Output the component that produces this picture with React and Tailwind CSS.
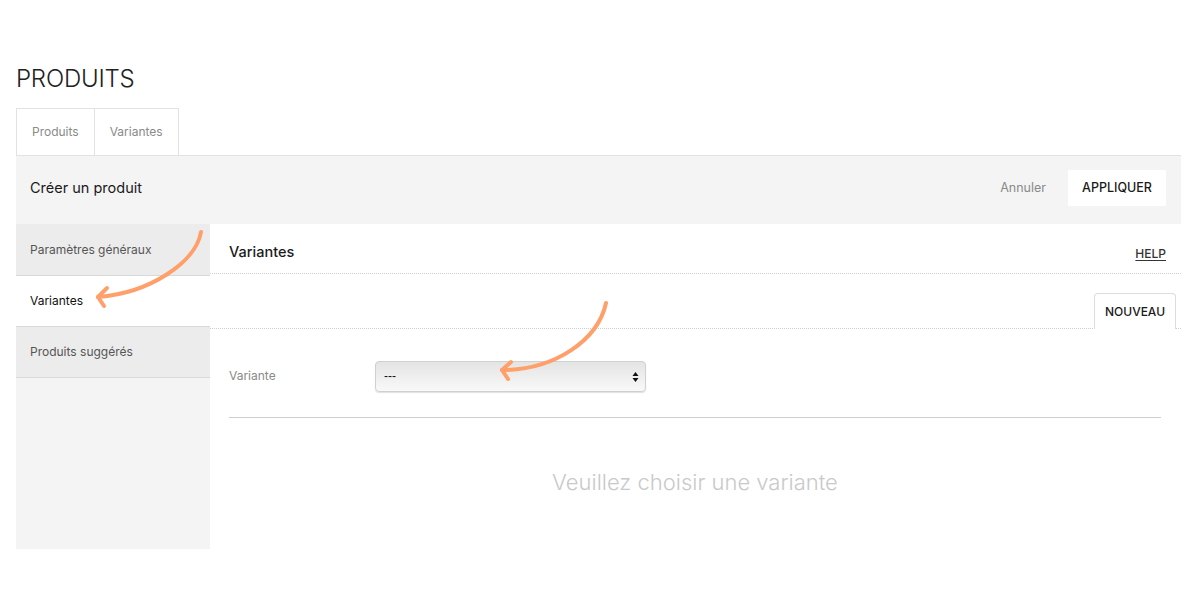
/**
 * Product editor – "Variantes" section with annotation arrows.
 */

function Arrow({ d, head }) {
  return (
    <g fill="none" stroke="#ff9f6a" strokeWidth={4} strokeLinecap="round" strokeLinejoin="round">
      <path d={d} />
      <path d={head} />
    </g>
  );
}

export default function App() {
  const sideItems = [
    { label: 'Paramètres généraux', active: false },
    { label: 'Variantes', active: true },
    { label: 'Produits suggérés', active: false },
  ];

  return (
    <div className="relative w-[1200px] h-[600px] bg-white px-4 font-['Inter','Liberation_Sans',sans-serif] overflow-hidden">
      {/* Page title */}
      <h1 className="pt-[64px] h-[108px] text-[24px] font-light text-[#222] tracking-[-0.2px] leading-[30px]">PRODUITS</h1>

      {/* Top tabs */}
      <div className="flex h-[47px]">
        {['Produits', 'Variantes'].map((t, i) => (
          <div
            key={t}
            className={`flex items-center px-[15px] border-t border-[#e2e2e2] border-r text-[12px] text-[#8a8a8a] ${i === 0 ? 'border-l' : ''}`}
          >
            {t}
          </div>
        ))}
      </div>

      {/* Header bar */}
      <div className="w-[1165px] h-[69px] bg-[#f4f4f4] border-t border-[#e2e2e2] flex items-center justify-between pl-[14px] pr-[15px] pb-[4px]">
        <div className="text-[14.5px] text-[#1a1a1a]">Créer un produit</div>
        <div className="flex items-center gap-[22px]">
          <span className="text-[12.5px] text-[#8a8a8a]">Annuler</span>
          <button className="h-[36px] w-[98px] bg-white text-[12.5px] font-medium text-[#1a1a1a]">APPLIQUER</button>
        </div>
      </div>

      {/* Body */}
      <div className="flex w-[1165px] h-[325px]">
        {/* Sidebar */}
        <div className="w-[194px] bg-[#f4f4f4] flex flex-col">
          {sideItems.map((it, i) => (
            <div
              key={it.label}
              className={`flex items-center pl-[14px] text-[12px] ${
                it.active
                  ? 'h-[50px] bg-white text-[#111]'
                  : `h-[52px] bg-[#ececec] text-[#555] border-b border-[#d9d9d9] ${i > 0 ? 'border-t' : ''}`
              }`}
            >
              {it.label}
            </div>
          ))}
        </div>

        {/* Main panel */}
        <div className="flex-1 flex flex-col">
          <div className="h-[50px] flex items-center justify-between pl-[19px] pr-[15px] pt-[6px] border-b border-dotted border-[#cfcfcf]">
            <span className="text-[14.5px] font-medium text-[#1a1a1a]">Variantes</span>
            <span className="text-[12px] font-medium text-[#333] underline underline-offset-2 mt-[4px]">HELP</span>
          </div>

          <div className="h-[55px] flex items-end justify-end pr-[5px] border-b border-dotted border-[#cfcfcf]">
            <div className="h-[36px] w-[82px] -mb-px bg-white border border-b-0 border-[#dcdcdc] rounded-t-[4px] flex items-center justify-center text-[12px] font-medium text-[#1a1a1a]">
              NOUVEAU
            </div>
          </div>

          <div className="mx-[19px] mr-[20px] flex-1 flex flex-col">
            <div className="h-[89px] flex items-center border-b border-[#cfcfcf] pt-[6px]">
              <span className="w-[146px] text-[12px] text-[#8a8a8a]">Variante</span>
              <div className="relative w-[271px] h-[31px] rounded-[4px] border border-[#d0d0d0] bg-gradient-to-b from-[#e4e4e4] to-[#f9f9f9] shadow-[0_1px_1px_rgba(0,0,0,0.12)] flex items-center pl-[8px] text-[12px] text-[#111] font-['Liberation_Sans',sans-serif]">
                ---
                <svg className="absolute right-[6px] top-[9px]" width="7" height="12" viewBox="0 0 7 12">
                  <path d="M3.5 1 L6.5 5 L0.5 5 Z" fill="#111" />
                  <path d="M3.5 11 L6.5 7 L0.5 7 Z" fill="#111" />
                </svg>
              </div>
            </div>
            <div className="flex-1 flex justify-center pt-[50px]">
              <span className="text-[22px] font-light text-[#c9c9c9] leading-[28px]">Veuillez choisir une variante</span>
            </div>
          </div>
        </div>
      </div>

      {/* Annotation arrows (overlay) */}
      <svg className="absolute left-0 top-0 pointer-events-none" width="1200" height="600">
        <Arrow d="M201 232 C 196 262, 150 293, 98 297" head="M107 288 L 98 297 L 104 306" />
        <Arrow d="M606 303 C 598 340, 555 370, 502 370" head="M511 362 L 502 370 L 508 379" />
      </svg>
    </div>
  );
}
